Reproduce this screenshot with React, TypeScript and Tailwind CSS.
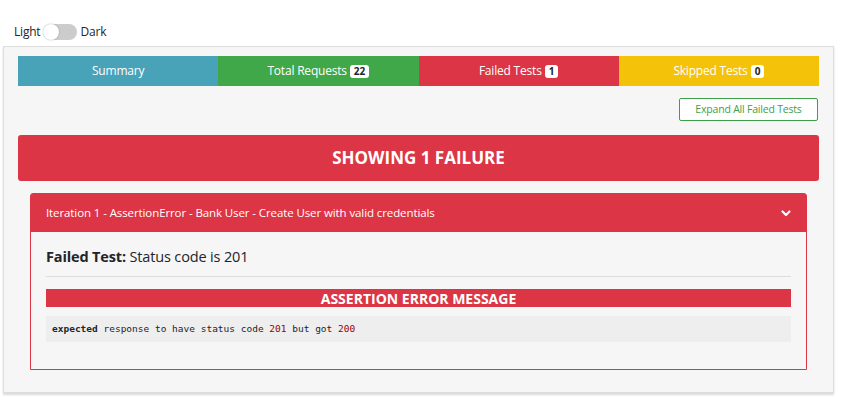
import React from "react";

const tabs = [
  { label: "Summary", color: "bg-[#48a2b8]" },
  { label: "Total Requests", color: "bg-[#41a84a]", count: 22 },
  { label: "Failed Tests", color: "bg-[#dc3545]", count: 1 },
  { label: "Skipped Tests", color: "bg-[#f5c20a]", count: 0 },
];

const App = () => {
  return (
    <div className="min-h-screen bg-white text-[#212529] font-['Open_Sans',sans-serif]">
      <div className="flex items-center pt-[21px] pl-[14px] h-[42px] text-[12px] tracking-[-0.2px]">
        <span>Light</span>
        <span className="relative mx-[3px] inline-block h-[16px] w-[34px] rounded-full bg-[#ccc]">
          <span className="absolute left-0 top-0 h-[16px] w-[16px] rounded-full bg-white shadow-[0_0_2px_rgba(0,0,0,0.25)]" />
        </span>
        <span>Dark</span>
      </div>

      <div className="mx-[3px] mt-[4px] w-[831px] border border-[#ddd] bg-[#f6f6f6] px-[14px] pt-[9px] pb-[22px] shadow-[0_2px_2px_rgba(0,0,0,0.15)]">
        <div className="grid grid-cols-4 h-[30px]">
          {tabs.map((t) => (
            <div key={t.label} className={`${t.color} flex items-center justify-center text-[12px] tracking-[-0.2px] text-white`}>
              {t.label}
              {t.count !== undefined && (
                <span className="ml-[3px] rounded-[3px] bg-white px-[4px] text-[10px] font-bold leading-[13px] tracking-normal text-[#212529]">
                  {t.count}
                </span>
              )}
            </div>
          ))}
        </div>

        <div className="flex justify-end pt-[12px] pr-[1px]">
          <button className="h-[23px] w-[139px] rounded-[2px] border border-[#3f9f48] bg-white text-[10.5px] tracking-[-0.2px] text-[#3f9f48]">
            Expand All Failed Tests
          </button>
        </div>

        <div className="mt-[14px] flex h-[46px] items-center justify-center rounded-[3px] bg-[#dc3545] text-[17px] font-bold text-white">
          SHOWING 1 FAILURE
        </div>

        <div className="mx-[12px] mt-[12px] rounded-t-[3px] border border-[#dc3545]">
          <div className="flex h-[38px] items-center justify-between bg-[#dc3545] pl-[15px] pr-[14px] text-[11.5px] tracking-[-0.1px] text-white">
            <span>Iteration 1 - AssertionError - Bank User - Create User with valid credentials</span>
            <svg width="12" height="12" viewBox="0 0 12 12" fill="none" stroke="white" strokeWidth="2.2" strokeLinecap="round" strokeLinejoin="round">
              <path d="M2.5 4.5 6 8l3.5-3.5" />
            </svg>
          </div>
          <div className="px-[15px] pt-[14px] pb-[27px]">
            <div className="text-[14.5px] leading-[22px] tracking-[-0.15px]">
              <span className="font-bold">Failed Test:</span> Status code is 201
            </div>
            <div className="mt-[8px] border-t border-[#ddd]" />
            <div className="mt-[12px] flex h-[18px] items-center justify-center bg-[#dc3545] text-[14px] font-bold text-white">
              ASSERTION ERROR MESSAGE
            </div>
            <div className="mt-[9px] flex h-[26px] items-center bg-[#eeeeee] px-[6px] font-['DejaVu_Sans_Mono',monospace] text-[9.5px]">
              <span className="font-bold">expected</span>&nbsp;response to have status code&nbsp;
              <span className="text-[#990000]">201</span>&nbsp;but got&nbsp;
              <span className="text-[#990000]">200</span>
            </div>
          </div>
        </div>
      </div>
    </div>
  );
};

export default App;
